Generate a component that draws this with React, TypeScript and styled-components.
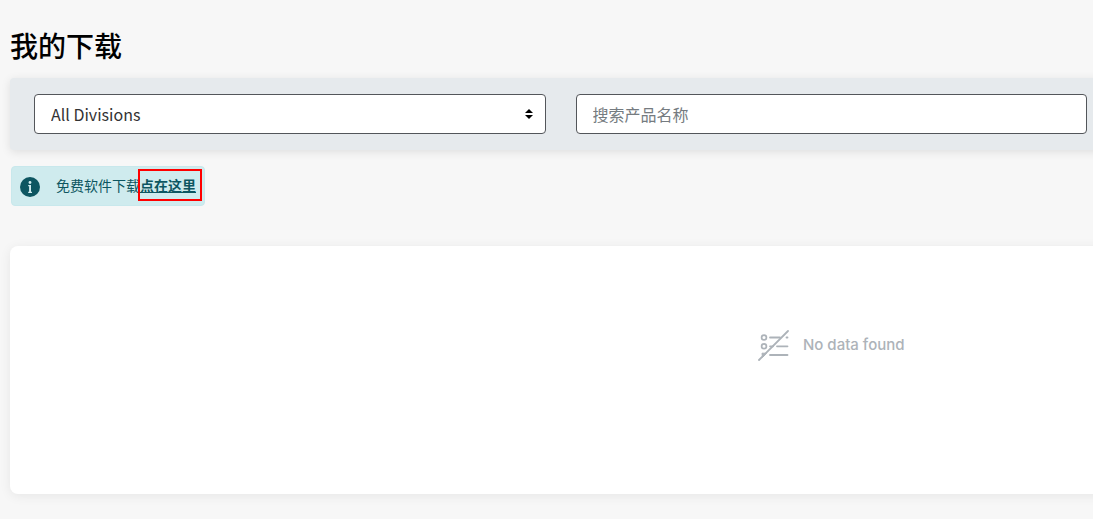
import React from "react";
import styled, { createGlobalStyle } from "styled-components";

const GlobalStyle = createGlobalStyle`
  *, *::before, *::after { box-sizing: border-box; }
  body {
    margin: 0;
    background: #f7f7f7;
    color: #000;
    font-family: "Noto Sans CJK SC", "Noto Sans", sans-serif;
    font-size: 16px;
    line-height: 24px;
  }
`;

const Page = styled.main`
  min-height: 100vh;
  padding: 27px 0 24px 10px;
  overflow: hidden;
`;

const Content = styled.div`
  width: calc(150% + 18px);
`;

const Title = styled.h1`
  margin: 0 0 15px;
  font-size: 28px;
  line-height: 36px;
  font-weight: 500;
`;

const FilterBar = styled.form`
  display: grid;
  grid-template-columns: repeat(3, 1fr);
  gap: 30px;
  padding: 16px 24px;
  background: #e6eaed;
  border-radius: 4px;
  box-shadow: 0 2px 10px rgba(0, 0, 0, 0.1);
`;

const SelectWrap = styled.div`
  position: relative;
`;

const Select = styled.select`
  appearance: none;
  display: block;
  width: 100%;
  height: 40px;
  padding: 0 32px 0 16px;
  border: 1px solid #53565a;
  border-radius: 4px;
  background: #fff;
  color: #333;
  font: inherit;
`;

const SelectArrows = styled.svg`
  position: absolute;
  top: 15px;
  right: 13px;
  pointer-events: none;
`;

const SearchInput = styled.input`
  display: block;
  width: 100%;
  height: 40px;
  padding: 0 16px;
  border: 1px solid #53565a;
  border-radius: 4px;
  background: #fff;
  color: #333;
  font: inherit;

  &::placeholder {
    color: #757b80;
    opacity: 1;
  }
`;

const Notice = styled.div`
  display: flex;
  align-items: center;
  width: fit-content;
  height: 40px;
  margin: 16px 0 40px 1px;
  padding: 0 2px 2px 8px;
  border: 1px solid #c8e8ec;
  border-radius: 4px;
  background: #cfebee;
  color: #0d5661;
  font-size: 14px;
`;

const NoticeIcon = styled.svg`
  margin: 4px 16px 0 0;
`;

const NoticeLink = styled.a`
  display: block;
  height: 32px;
  margin-left: -2px;
  padding-right: 4px;
  border: 2px solid #f00;
  color: #0d5661;
  font-weight: 700;
  line-height: 28px;
  text-decoration: underline;
`;

const Card = styled.section`
  display: flex;
  align-items: center;
  justify-content: center;
  gap: 14px;
  height: 248px;
  padding-bottom: 50px;
  border-radius: 8px;
  background: #fff;
  box-shadow: 0 2px 12px rgba(0, 0, 0, 0.07);
`;

const EmptyText = styled.p`
  margin: 0;
  color: #adb3b9;
  font-family: Inter, "Open Sans", sans-serif;
  font-size: 15px;
  font-weight: 500;
`;

export default function App() {
  return (
    <>
      <GlobalStyle />
      <Page>
        <Content>
          <Title>我的下载</Title>
          <FilterBar>
            <SelectWrap>
              <Select aria-label="Division" defaultValue="all">
                <option value="all">All Divisions</option>
              </Select>
              <SelectArrows width="8" height="10" viewBox="0 0 8 10" aria-hidden="true">
                <path d="M0 4 4 0 8 4ZM0 6 4 10 8 6Z" fill="#000" />
              </SelectArrows>
            </SelectWrap>
            <SearchInput type="text" aria-label="搜索产品名称" placeholder="搜索产品名称" />
          </FilterBar>
          <Notice>
            <NoticeIcon width="20" height="20" viewBox="0 0 20 20" aria-hidden="true">
              <circle cx="10" cy="10" r="10" fill="#0d5661" />
              <circle cx="10" cy="5.5" r="1.4" fill="#cfebee" />
              <path d="M8.2 8h2.8v6.7h1v1.2H8.2v-1.2h.9V9.2h-.9Z" fill="#cfebee" />
            </NoticeIcon>
            免费软件下载
            <NoticeLink href="#free-software">点在这里</NoticeLink>
          </Notice>
          <Card>
            <svg width="31" height="31" viewBox="0 0 31 31" fill="none" stroke="#adb3b9" aria-hidden="true">
              <g strokeWidth="1.7">
                <circle cx="6" cy="7.5" r="2.4" />
                <circle cx="6" cy="16.3" r="2.4" />
                <path d="M4 23.2h4.5l-4 4.2Z" fill="#adb3b9" strokeWidth="1" />
              </g>
              <g strokeWidth="1.8" strokeLinecap="round">
                <path d="M12 7.5h10M28.5 7.5h1M19 16.3h10.5M12 25h17.5" />
                <path d="M1 30 30 1" />
                <path d="M12 16.3h3" />
              </g>
            </svg>
            <EmptyText>No data found</EmptyText>
          </Card>
        </Content>
      </Page>
    </>
  );
}
